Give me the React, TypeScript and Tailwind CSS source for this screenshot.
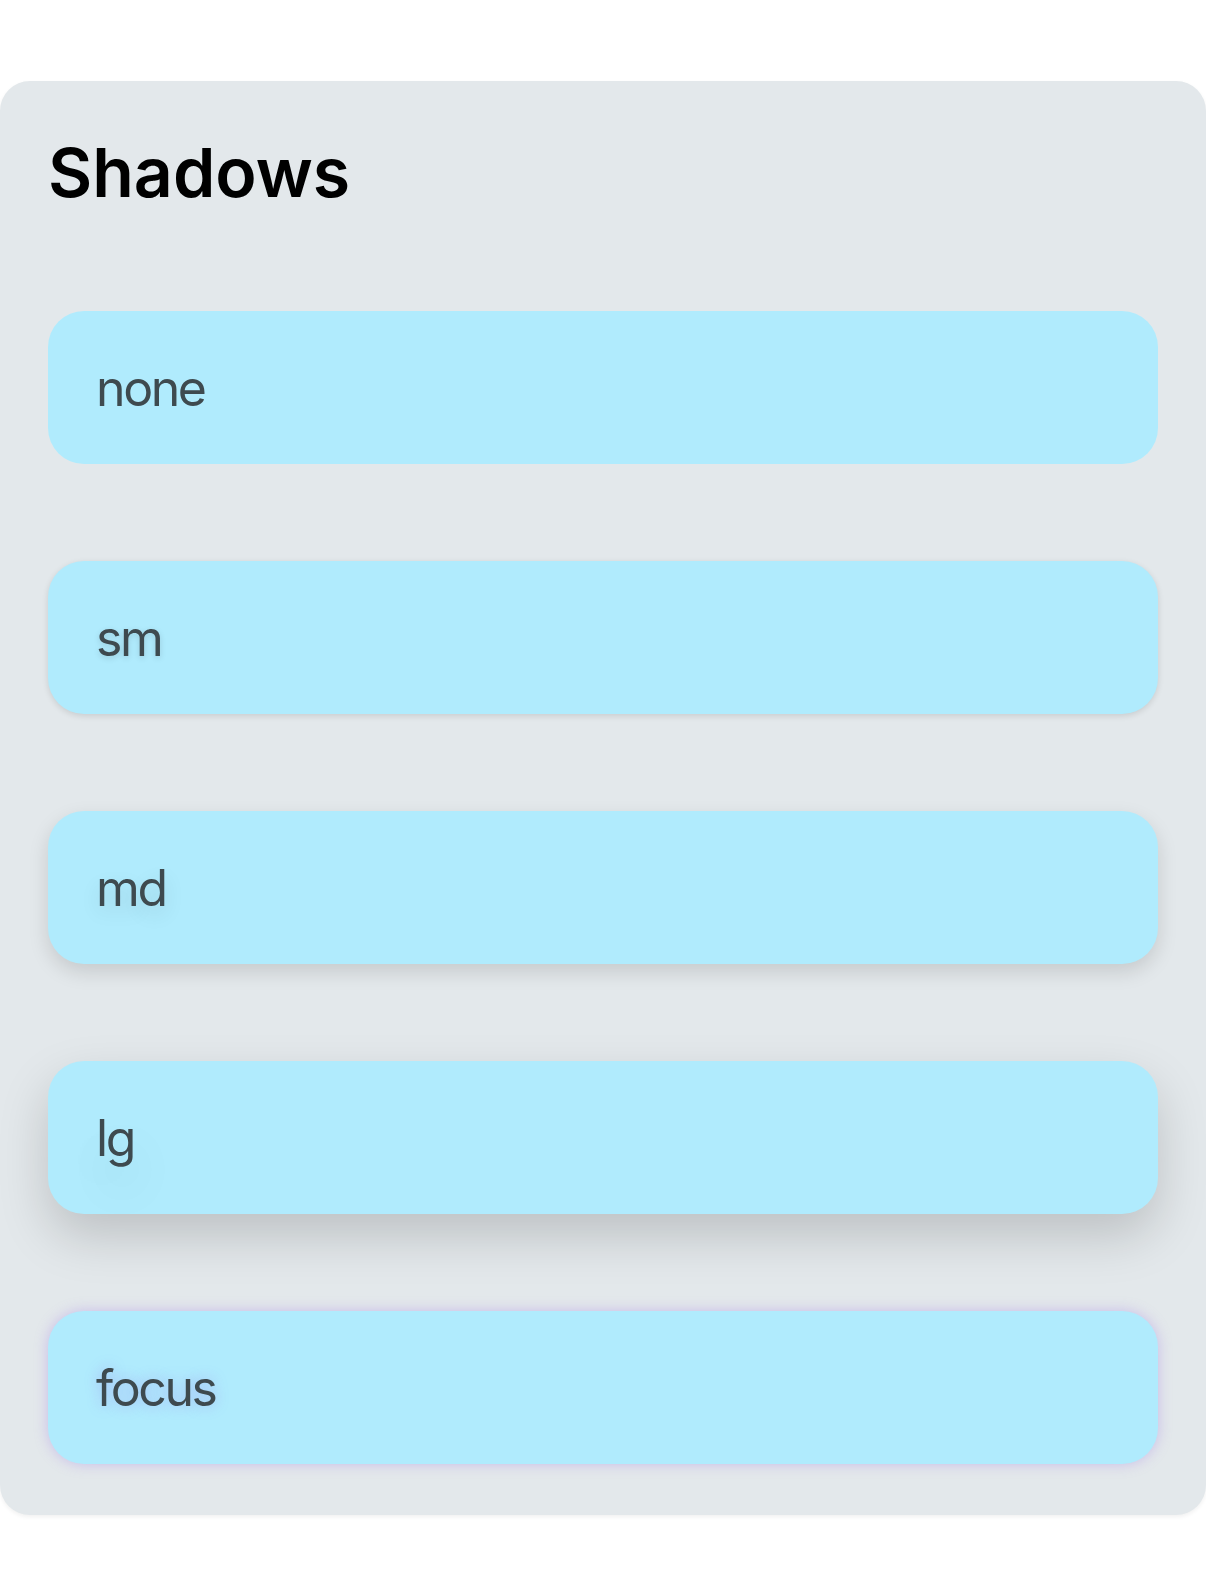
const rows = [
  { label: "none", shadow: "", glow: "" },
  {
    label: "sm",
    shadow: "shadow-[0_2px_6px_rgba(0,0,0,0.12)]",
    glow: "[text-shadow:0_2px_6px_rgba(0,0,0,0.14)]",
  },
  {
    label: "md",
    shadow: "shadow-[0_8px_20px_rgba(0,0,0,0.13)]",
    glow: "[text-shadow:0_8px_20px_rgba(0,0,0,0.12)]",
  },
  {
    label: "lg",
    shadow: "shadow-[0_22px_50px_rgba(0,0,0,0.17)]",
    glow: "[text-shadow:0_22px_50px_rgba(0,0,0,0.14)]",
  },
  {
    label: "focus",
    shadow: "shadow-[0_0_14px_rgba(150,110,230,0.35)]",
    glow: "[text-shadow:0_0_14px_rgba(150,110,230,0.4)]",
  },
]

export default function App() {
  return (
    <div className="min-h-screen bg-white pt-[81px] font-['Inter',sans-serif]">
      <div className="rounded-[30px] bg-[#e3e8eb] px-12 pt-12 pb-[51px] shadow-[0_2px_4px_rgba(0,0,0,0.06)]">
        <h1 className="pt-[9px] text-[68px] leading-none font-semibold text-black">Shadows</h1>

        <div className="mt-[105px] flex flex-col gap-[97px]">
          {rows.map((row) => (
            <div
              key={row.label}
              className={`flex h-[153px] items-center rounded-[36px] bg-[#b0ebfd] px-12 ${row.shadow}`}
            >
              <span className={`text-[50px] leading-none tracking-[-2.4px] text-[#3e4a4f] ${row.glow}`}>
                {row.label}
              </span>
            </div>
          ))}
        </div>
      </div>
    </div>
  )
}
